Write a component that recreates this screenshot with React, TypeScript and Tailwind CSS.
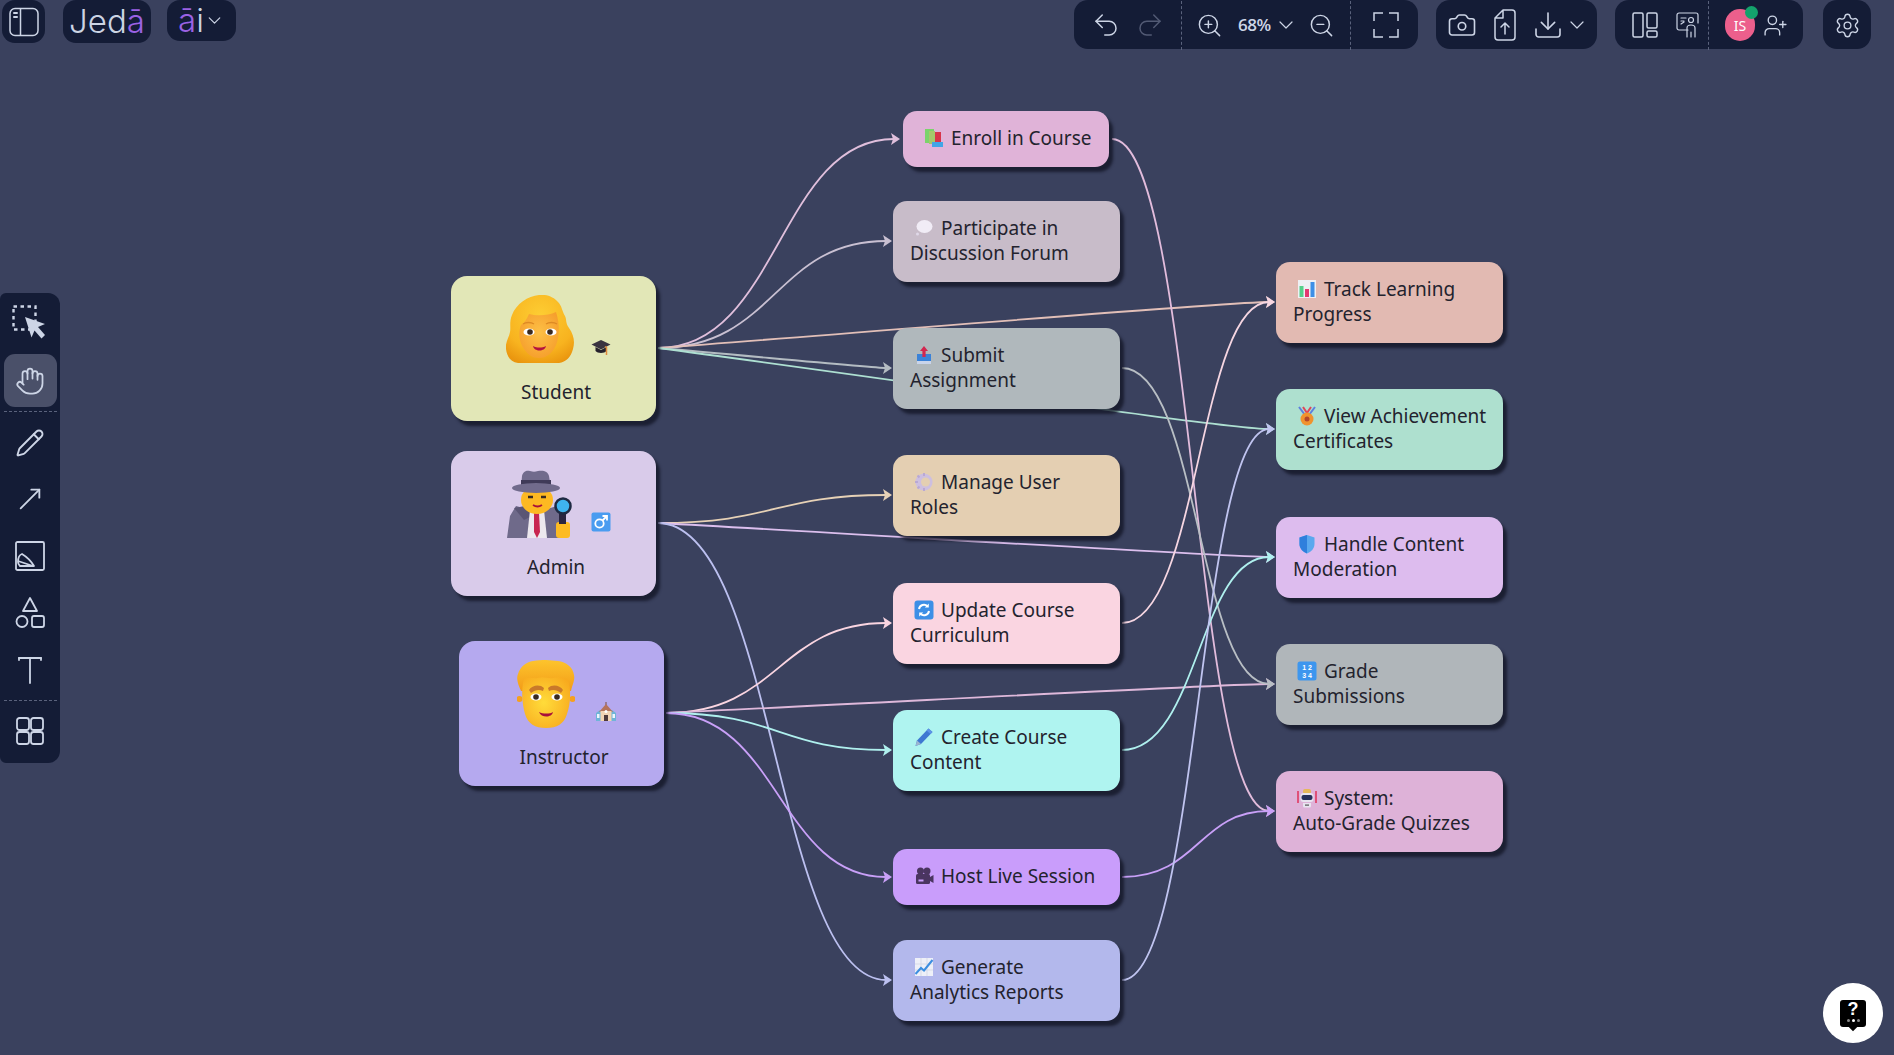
import React from "react";
import { Undo2, Redo2, ZoomIn, ZoomOut, ChevronDown, Camera, Download, Hand, Pencil, MoveUpRight, Settings, UserPlus } from "lucide-react";

const ICON = "#cdd5e6";

type P = { w?: number; children: React.ReactNode; vb?: string };
const Svg = ({ w = 20, vb = "0 0 20 20", children }: P) => (
  <svg width={w} height={w} viewBox={vb} className="shrink-0 block">{children}</svg>
);

/* ---------- small colour emoji, drawn ---------- */
const Books = () => (
  <Svg><rect x="1" y="1" width="9" height="14" fill="#7bd36b" /><rect x="5" y="3" width="6" height="13" fill="#a4c86b" /><rect x="11" y="4" width="6" height="13" fill="#d8344a" /><rect x="8" y="14" width="11" height="5" fill="#41a5e6" /></Svg>
);
const Bubble = () => (
  <Svg><ellipse cx="10.5" cy="8.500" rx="8" ry="6.500" fill="#f1ecf6" /><circle cx="3.500" cy="16" r="1.500" fill="#e0d8e8" /></Svg>
);
const Outbox = () => (
  <Svg><path d="M3 9h14v8a2 2 0 0 1-2 2H5a2 2 0 0 1-2-2z" fill="#3a82d8" /><path d="M10 1l4 5h-2.4v6H8.4V6H6z" fill="#d3264f" /><rect x="3" y="16" width="14" height="3" fill="#c9d4ea" /></Svg>
);
const Gear = () => (
  <Svg><circle cx="10" cy="10" r="8.600" fill="#cdbfe0" /><circle cx="11.500" cy="10" r="4.500" fill="#e4cfb2" /><path d="M10 1v3M10 16v3M1 10h3M3.500 3.500l2 2M3.500 16.500l2-2" stroke="#b9a8d4" strokeWidth="2" /></Svg>
);
const Refresh = () => (
  <Svg><rect x="0.5" y="0.5" width="19" height="19" rx="3" fill="#3d8fe6" /><path d="M5 9a5 5 0 0 1 8.500-2.800M15 11a5 5 0 0 1-8.500 2.800" fill="none" stroke="#fff" strokeWidth="2" /><path d="M14.800 3.500v4h-4zM5.200 16.500v-4h4z" fill="#fff" /></Svg>
);
const Pen = () => (
  <Svg><path d="M14.500 1.500l4 3.500L7 17l-5.500 2L3 13.500z" fill="#3e78d2" /><path d="M3 13.500L7 17l-5.500 2z" fill="#9cb6cf" /><path d="M14.500 1.500l4 3.500-2 2-4-3.500z" fill="#5d93e6" /></Svg>
);
const MovieCam = () => (
  <Svg><circle cx="6.500" cy="5" r="3.500" fill="#4a3560" /><circle cx="13" cy="5" r="3.500" fill="#4a3560" /><rect x="2" y="8" width="14" height="10" rx="1.500" fill="#4a3560" /><path d="M16 11l3.500-2v8L16 15z" fill="#4a3560" /><rect x="4.500" y="13.500" width="5" height="2" fill="#c99dfb" /></Svg>
);
const ChartUp = () => (
  <Svg><rect x="1" y="1" width="18" height="18" fill="#eef0f8" /><path d="M1 7h18M1 13h18M7 1v18M13 1v18" stroke="#cfd3e2" strokeWidth=".7" /><path d="M1.500 17L7 11l3 2.500L18.500 3" fill="none" stroke="#3c8ee0" strokeWidth="2" /></Svg>
);
const Bars = () => (
  <Svg><rect x="1" y="1" width="18" height="18" fill="#eef0f4" /><rect x="2.500" y="7" width="4" height="11" fill="#54d08a" /><rect x="8" y="10" width="4" height="8" fill="#e23a70" /><rect x="13.500" y="3" width="4" height="15" fill="#3d8fe6" /></Svg>
);
const Medal = () => (
  <Svg><path d="M2 1l6 8M18 1l-6 8" stroke="#5b7fe0" strokeWidth="2" /><path d="M6 1l4 6 4-6" fill="none" stroke="#e0455a" strokeWidth="2" /><circle cx="10" cy="13" r="6.500" fill="#f0932e" /><circle cx="10" cy="13" r="2.500" fill="#b4472a" /></Svg>
);
const Shield = () => (
  <Svg><path d="M10 1l7.500 2.500V10c0 4.500-3.500 8-7.500 9.500C6 18 2.500 14.500 2.500 10V3.500z" fill="#5aa8ee" /><path d="M10 1v18.500C6 18 2.500 14.500 2.500 10V3.500z" fill="#2f7fdc" /></Svg>
);
const Digits = () => (
  <Svg>
    <rect x="0.500" y="0.500" width="19" height="19" rx="2.500" fill="#3d96ee" />
    <text x="10" y="9" textAnchor="middle" fontSize="7" fontWeight="700" fill="#fff" fontFamily="Liberation Sans">1 2</text>
    <text x="10" y="17" textAnchor="middle" fontSize="7" fontWeight="700" fill="#fff" fontFamily="Liberation Sans">3 4</text>
  </Svg>
);
const Robot = () => (
  <Svg><path d="M1 3v12M19 3v12" stroke="#e0325a" strokeWidth="1.500" /><rect x="6" y="1" width="8" height="5" rx="2" fill="#e6b85a" /><rect x="3.500" y="5" width="13" height="9" rx="3" fill="#e8e4f0" /><rect x="4.500" y="7" width="11" height="5" rx="2" fill="#27305a" /><path d="M6 15h8v3a1.500 1.500 0 0 1-1.500 1.500h-5A1.500 1.500 0 0 1 6 18z" fill="#e8e4f0" /><rect x="8" y="16.500" width="4" height="1.200" fill="#555" /></Svg>
);
const Cap = () => (
  <Svg><path d="M10 3l9.500 4.500L10 12.500.5 7.500z" fill="#3a3440" /><path d="M4.500 10v4c2 2.500 9 2.500 11 0v-4l-5.500 3z" fill="#25212c" /><path d="M14 9.500l1.500 1V18" fill="none" stroke="#e08a3c" strokeWidth="1.500" /></Svg>
);
const Male = () => (
  <Svg><rect x="0.500" y="0.500" width="19" height="19" rx="2" fill="#4a9cf0" /><circle cx="8.500" cy="11.500" r="4.200" fill="none" stroke="#fff" strokeWidth="1.800" /><path d="M11.500 8.500L15.500 4.500M11.500 4h4.500v4.500" fill="none" stroke="#fff" strokeWidth="1.800" /></Svg>
);
const School = () => (
  <Svg><path d="M10 0v3" stroke="#7a4a3a" strokeWidth="1" /><path d="M0 11l4-3h12l4 3v8H0z" fill="#6fb4d8" /><path d="M3 10l7-8 7 8z" fill="#b5735c" /><rect x="4.500" y="9" width="11" height="10" fill="#f2d3b4" /><rect x="8" y="13" width="4" height="6" fill="#4f3a3c" /><circle cx="10" cy="9.500" r="1.500" fill="#fff" /><rect x="1" y="12" width="2.500" height="4" fill="#eef6fb" /><rect x="16.500" y="12" width="2.500" height="4" fill="#eef6fb" /></Svg>
);

/* ---------- large 3D-like faces ---------- */
const Woman = () => (
  <svg width="68" height="68" viewBox="0 0 68 68" className="shrink-0 block">
    <defs>
      <radialGradient id="wh" cx="50%" cy="30%" r="75%"><stop offset="0" stopColor="#fdcd33" /><stop offset="0.7" stopColor="#f8b31f" /><stop offset="1" stopColor="#ea960f" /></radialGradient>
      <radialGradient id="wf" cx="50%" cy="45%" r="65%"><stop offset="0" stopColor="#fdc046" /><stop offset="1" stopColor="#f59b2a" /></radialGradient>
    </defs>
    <path d="M33 0c7-1 15 2 19 7 4 4 4 9 7 14 2 4 0 6 4 12 5 7 6 14 4 21-2 8-7 13-14 14H12C5 67 1 62 0 54c-1-7 3-11 4-17 1-5-1-10 2-17C10 9 22 1 33 0z" fill="url(#wh)" />
    <path d="M23 19c7 2 19 2 27-2 4 11 4 28-2 37-4 6-9 9-15 9s-11-3-15-9c-5-7-6-17-3-24 3-2 6-6 8-11z" fill="url(#wf)" />
    <ellipse cx="23" cy="37" rx="5.500" ry="3.600" fill="#fff" /><ellipse cx="45" cy="37" rx="5.500" ry="3.600" fill="#fff" />
    <circle cx="24" cy="37" r="2.800" fill="#3a2a20" /><circle cx="44" cy="37" r="2.800" fill="#3a2a20" />
    <path d="M17 29c3-2 8-2 11 0M40 29c3-2 8-2 11 0" fill="none" stroke="#dd8a24" strokeWidth="1.400" />
    <path d="M27 51c4 2 9 2 13 0-1 6-12 6-13 0z" fill="#b3123f" />
  </svg>
);
const Man = () => (
  <svg width="58" height="68" viewBox="0 0 58 68" className="shrink-0 block">
    <defs>
      <radialGradient id="mf" cx="45%" cy="50%" r="65%"><stop offset="0" stopColor="#ffdc3a" /><stop offset="1" stopColor="#f8aa1e" /></radialGradient>
      <linearGradient id="mh" x1="0" y1="0" x2="0" y2="1"><stop offset="0" stopColor="#fdc42c" /><stop offset="1" stopColor="#f39c18" /></linearGradient>
    </defs>
    <path d="M29 0c5 0 8 1 12 1 8 1 15 6 16 14 1 5-1 8-3 16H4C1 24-1 19 1 14 3 7 9 2 16 1c5-1 8-1 13-1z" fill="url(#mh)" />
    <circle cx="2.500" cy="39" r="3" fill="#f5a01e" /><circle cx="55.500" cy="39" r="3" fill="#f5a01e" />
    <path d="M7 19c5-3 9 0 14-1 6-2 10 1 15 0 5-1 9-1 15 1 3 10 3 24-1 35-3 10-10 14-21 14S11 64 8 54C5 43 4 29 7 19z" fill="url(#mf)" />
    <path d="M12 30c3-5 11-6 15-2l-1 3c-4-2-8-1-12 2zM46 30c-3-5-11-6-15-2l1 3c4-2 8-1 12 2z" fill="#c9792a" />
    <ellipse cx="19" cy="37" rx="5.500" ry="3.400" fill="#fff" /><ellipse cx="40" cy="37" rx="5.500" ry="3.400" fill="#fff" />
    <circle cx="19" cy="37" r="2.800" fill="#3a2a20" /><circle cx="40" cy="37" r="2.800" fill="#3a2a20" />
    <path d="M22 52c4 2 11 2 14 0-1 6-12 6-14 0z" fill="#a8103a" />
  </svg>
);
const Sleuth = () => (
  <svg width="66" height="68" viewBox="0 0 66 68" className="shrink-0 block">
    <path d="M0 68l3-22 6-10 11 3h20l10-3 6 10 3 22z" fill="#6f6a8a" />
    <path d="M7 38l11-2 7 10-8 4z" fill="#5a5574" />
    <path d="M23 40h14l3 28H20z" fill="#ece8ee" /><path d="M27 43h5l1 19-3 6-3-6z" fill="#c8264f" />
    <ellipse cx="30" cy="30" rx="16" ry="14" fill="#fdb922" />
    <path d="M21 27h5M34 27h5" stroke="#3a2a20" strokeWidth="2.500" />
    <path d="M26 35c3 2 6 2 9 0" stroke="#a8103a" strokeWidth="1.800" fill="none" />
    <path d="M15 6c1-5 5-6 8-5 3 1 5 1 8 0 5-1 10 0 11 5l2 12H14z" fill="#716b8c" />
    <rect x="14" y="10" width="30" height="7" fill="#3f3a58" />
    <ellipse cx="29" cy="18" rx="24" ry="5" fill="#716b8c" />
    <rect x="49" y="52" width="14" height="16" rx="3" fill="#fdbb22" />
    <rect x="52" y="40" width="7" height="14" fill="#2a2540" />
    <circle cx="56" cy="36" r="7.500" fill="#3fb4ef" stroke="#1e2a42" strokeWidth="2.500" />
  </svg>
);

/* ---------- toolbar icons ---------- */
const sw = { fill: "none", stroke: ICON, strokeWidth: 1.5, strokeLinecap: "round", strokeLinejoin: "round" } as const;
const Sidebar = () => (
  <svg width="30" height="30" viewBox="0 0 30 30"><rect x="1" y="1.500" width="28" height="27" rx="5" {...sw} /><path d="M11.500 2v26" {...sw} /><path d="M5 6h3M5 10h3" {...sw} strokeWidth={2} /></svg>
);
const Corners = () => (
  <svg width="26" height="26" viewBox="0 0 26 26"><path d="M10 1H1v8M16 1h9v8M10 25H1v-8M16 25h9v-8" {...sw} strokeLinecap="butt" strokeLinejoin="miter" /></svg>
);
const FileUp = () => (
  <svg width="22" height="32" viewBox="0 0 22 32"><path d="M9 1h9a3 3 0 0 1 3 3v24a3 3 0 0 1-3 3H4a3 3 0 0 1-3-3V9z M9 1v8H1" {...sw} /><path d="M11 25V14M7 18l4-4 4 4" {...sw} /></svg>
);
const Panels = () => (
  <svg width="26" height="26" viewBox="0 0 26 26"><rect x="1" y="1" width="10" height="24" rx="1.500" {...sw} /><rect x="15" y="1" width="10" height="15" rx="1.500" {...sw} /><rect x="15" y="19" width="10" height="6" rx="1.500" {...sw} /></svg>
);
const Presenter = () => (
  <svg width="24" height="26" viewBox="0 0 24 26"><path d="M12 18H3a2 2 0 0 1-2-2V3a2 2 0 0 1 2-2h17a2 2 0 0 1 2 2v8" {...sw} strokeWidth={1.200} /><path d="M5 6h5M5 9h3M5 12l3-2" {...sw} strokeWidth={1.200} /><circle cx="15" cy="8" r="2.500" {...sw} strokeWidth={1.200} /><path d="M11 25v-9c0-2 2-3 4-3s4 1 4 3v9M15 20v5" {...sw} strokeWidth={1.200} /></svg>
);
const Select = () => (
  <svg width="36" height="34" viewBox="0 0 36 34"><rect x="1.500" y="1.500" width="22" height="23" fill="none" stroke={ICON} strokeWidth="2.400" strokeDasharray="3.500 3.500" /><path d="M13 12l20 7-7 3 7 8-3.500 3.500-7-8-3 7z" fill={ICON} /></svg>
);
const ImageTool = () => (
  <svg width="30" height="30" viewBox="0 0 30 30"><rect x="1" y="1" width="28" height="28" rx="1.500" {...sw} strokeWidth={1.800} /><path d="M3 21c0-3 1-7 4-8 5 3 9 7 12 12H5c-1-1-2-2-2-4z M3 20l15 5" {...sw} strokeWidth={1.800} /></svg>
);
const Shapes = () => (
  <svg width="30" height="32" viewBox="0 0 30 32"><path d="M15 1l7 13H8z" {...sw} strokeWidth={1.800} /><circle cx="7" cy="24.500" r="5.500" {...sw} strokeWidth={1.800} /><rect x="17" y="19" width="12" height="11" rx="2" {...sw} strokeWidth={1.800} /></svg>
);
const TextTool = () => (
  <svg width="26" height="28" viewBox="0 0 26 28"><path d="M2 2h22M13 2v25" {...sw} strokeWidth={1.800} /><path d="M2 2v2M24 2v2" {...sw} strokeWidth={1.800} /></svg>
);
const Grid = () => (
  <svg width="28" height="28" viewBox="0 0 28 28"><rect x="1" y="1" width="12" height="12" rx="2.500" {...sw} strokeWidth={1.800} /><rect x="15" y="1" width="12" height="12" rx="2.500" {...sw} strokeWidth={1.800} /><rect x="1" y="15" width="12" height="12" rx="2.500" {...sw} strokeWidth={1.800} /><rect x="15" y="15" width="12" height="12" rx="2.500" {...sw} strokeWidth={1.800} /></svg>
);

const Sep = ({ className = "" }: { className?: string }) => (
  <div className={"w-0 h-[49px] border-l border-dashed border-[#5a627c] shrink-0 " + className} />
);
const Bar = ({ className, children }: { className: string; children: React.ReactNode }) => (
  <div className={"h-[49px] flex items-center rounded-[14px] bg-[#141c36] shrink-0 " + className}>{children}</div>
);

/* ---------- diagram ---------- */
type Task = { cls: string; bg: string; icon: React.ReactNode; l1: string; l2?: string };
const tasks: Task[] = [
  { cls: "left-[903px] top-[111px] w-[206px] h-[56px] pl-[17px]", bg: "bg-[#e0b3d8]", icon: <Books />, l1: "Enroll in Course" },
  { cls: "left-[893px] top-[201px] w-[227px] h-[81px] pl-[17px]", bg: "bg-[#c8bcc9]", icon: <Bubble />, l1: "Participate in", l2: "Discussion Forum" },
  { cls: "left-[893px] top-[328px] w-[227px] h-[81px] pl-[17px]", bg: "bg-[#b0b8bc]", icon: <Outbox />, l1: "Submit", l2: "Assignment" },
  { cls: "left-[893px] top-[455px] w-[227px] h-[81px] pl-[17px]", bg: "bg-[#e4cfb2]", icon: <Gear />, l1: "Manage User", l2: "Roles" },
  { cls: "left-[893px] top-[583px] w-[227px] h-[81px] pl-[17px]", bg: "bg-[#fad5e1]", icon: <Refresh />, l1: "Update Course", l2: "Curriculum" },
  { cls: "left-[893px] top-[710px] w-[227px] h-[81px] pl-[17px]", bg: "bg-[#aff4f0]", icon: <Pen />, l1: "Create Course", l2: "Content" },
  { cls: "left-[893px] top-[849px] w-[227px] h-[56px] pl-[17px]", bg: "bg-[#c99dfb]", icon: <MovieCam />, l1: "Host Live Session" },
  { cls: "left-[893px] top-[940px] w-[227px] h-[81px] pl-[17px]", bg: "bg-[#b3b8ec]", icon: <ChartUp />, l1: "Generate", l2: "Analytics Reports" },
  { cls: "left-[1276px] top-[262px] w-[227px] h-[81px] pl-[17px]", bg: "bg-[#e2bab2]", icon: <Bars />, l1: "Track Learning", l2: "Progress" },
  { cls: "left-[1276px] top-[389px] w-[227px] h-[81px] pl-[17px]", bg: "bg-[#aee0cf]", icon: <Medal />, l1: "View Achievement", l2: "Certificates" },
  { cls: "left-[1276px] top-[517px] w-[227px] h-[81px] pl-[17px]", bg: "bg-[#ddbcee]", icon: <Shield />, l1: "Handle Content", l2: "Moderation" },
  { cls: "left-[1276px] top-[644px] w-[227px] h-[81px] pl-[17px]", bg: "bg-[#b0b6ba]", icon: <Digits />, l1: "Grade", l2: "Submissions" },
  { cls: "left-[1276px] top-[771px] w-[227px] h-[81px] pl-[17px]", bg: "bg-[#deb2d8]", icon: <Robot />, l1: "System:", l2: "Auto-Grade Quizzes" },
];

const S = { x: 658, y: 348 };
const A = { x: 658, y: 523 };
const I = { x: 666, y: 713 };
const edges: [number, number, number, number, string, boolean?][] = [
  [S.x, S.y, 900, 139, "#e0bfdc"],
  [S.x, S.y, 892, 241, "#c9c0d2"],
  [S.x, S.y, 892, 368, "#b4bcc2", true],
  [S.x, S.y, 1275, 302, "#e2bfb8", true],
  [S.x, S.y, 1275, 429, "#aee0d2", true],
  [A.x, A.y, 892, 495, "#e6d1b6"],
  [A.x, A.y, 1275, 557, "#dcbfee", true],
  [A.x, A.y, 892, 980, "#bcc0f0"],
  [I.x, I.y, 892, 623, "#fad5e1"],
  [I.x, I.y, 1275, 684, "#deb8da", true],
  [I.x, I.y, 892, 750, "#aff0ee"],
  [I.x, I.y, 892, 877, "#c9a0f8"],
  [1112, 139, 1275, 811, "#e2bcdc"],
  [1122, 368, 1275, 684, "#b8bec4"],
  [1122, 623, 1275, 302, "#f6d6e2"],
  [1122, 750, 1275, 557, "#aff0ee"],
  [1122, 877, 1275, 811, "#c9a0f8"],
  [1122, 980, 1275, 429, "#c0c4f0"],
];

const edgePath = (x0: number, y0: number, x1: number, y1: number, straight?: boolean) => {
  const dx = x1 - x0;
  if (straight) {
    const c1x = x0 + dx * 0.35;
    const c1y = y0 + (y1 - y0) * 0.35;
    return `M${x0} ${y0}C${c1x} ${c1y} ${x1 - dx * 0.08} ${y1} ${x1 - 6} ${y1}`;
  }
  return `M${x0} ${y0}C${x0 + dx / 2} ${y0} ${x1 - dx / 2} ${y1} ${x1 - 6} ${y1}`;
};

const TaskNode = ({ t }: { t: Task }) => (
  <div className={"absolute flex flex-col justify-center rounded-[14px] shadow-[4px_5px_3px_rgba(18,20,36,0.75)] text-[19px] leading-[25px] pb-[2px] text-[#23232e] " + t.cls + " " + t.bg}>
    <div className="flex items-center">
      <span className="w-[31px] pl-[4px] shrink-0">{t.icon}</span>
      <span className="whitespace-nowrap">{t.l1}</span>
    </div>
    {t.l2 && <div className="whitespace-nowrap">{t.l2}</div>}
  </div>
);

const Person = ({ cls, gap, big, small, label }: { cls: string; gap: string; big: React.ReactNode; small: React.ReactNode; label: string }) => (
  <div className={"absolute w-[205px] h-[145px] flex flex-col items-center rounded-[16px] shadow-[4px_5px_3px_rgba(18,20,36,0.75)] pt-[19px] text-[19px] leading-[25px] text-[#23232e] " + cls}>
    <div className={"flex items-end ml-[10px] h-[68px] " + gap}>
      {big}
      <span className="mb-[6px]">{small}</span>
    </div>
    <div className="mt-[17px] ml-[5px]">{label}</div>
  </div>
);

export default function App() {
  return (
    <div className="relative w-[1894px] h-[1055px] overflow-hidden bg-[#3a415e] font-['Noto_Sans','Open_Sans',sans-serif]">
      {/* diagram edges */}
      <svg className="absolute inset-0" width="1894" height="1055">
        {edges.map(([x0, y0, x1, y1, c, st], i) => (
          <g key={i}>
            <path d={edgePath(x0, y0, x1, y1, st)} fill="none" stroke={c} strokeWidth="1.800" />
            <path d={`M${x1 - 9} ${y1 - 6}L${x1} ${y1}L${x1 - 9} ${y1 + 6}L${x1 - 7} ${y1}z`} fill={c} />
          </g>
        ))}
      </svg>

      <Person cls="left-[451px] top-[276px] bg-[#e2e7b7]" gap="gap-[17px]" big={<Woman />} small={<Cap />} label="Student" />
      <Person cls="left-[451px] top-[451px] bg-[#d9cbea]" gap="gap-[18px]" big={<Sleuth />} small={<Male />} label="Admin" />
      <Person cls="left-[459px] top-[641px] bg-[#b5a9ef]" gap="gap-[21px]" big={<Man />} small={<School />} label="Instructor" />
      {tasks.map((t) => <TaskNode key={t.l1} t={t} />)}

      {/* top bar */}
      <div className="absolute inset-x-0 top-0 flex items-start pr-[23px] pl-[2px]">
        <div className="w-[43px] h-[43px] rounded-[13px] bg-[#141c36] flex items-center justify-center"><Sidebar /></div>
        <div className="ml-[18px] w-[88px] h-[43px] rounded-[13px] bg-[#141c36] flex items-center justify-center font-['Inter'] font-light text-[33px] leading-none text-[#ccd4e4]">
          Jed<span className="text-[#9b62e4]">ā</span>
        </div>
        <div className="ml-[16px] w-[69px] h-[41px] rounded-[13px] bg-[#141c36] flex items-center justify-center font-['Inter'] font-light text-[33px] leading-none text-[#ccd4e4]">
          <span className="text-[#9b62e4]">ā</span>i<ChevronDown size={21} color={ICON} strokeWidth={1.4} />
        </div>
        <div className="flex-1" />

        <Bar className="w-[344px] pt-[1px]">
          <Undo2 size={30} color={ICON} strokeWidth={1.2} className="ml-[17px]" />
          <Redo2 size={30} color="#525a74" strokeWidth={1.2} className="ml-[14px]" />
          <Sep className="ml-[16px]" />
          <ZoomIn size={27} color={ICON} strokeWidth={1.3} className="ml-[14px]" />
          <span className="ml-[15px] text-[17px] font-semibold text-[#cdd5e6] font-['Open_Sans'] tracking-[-0.5px]">68%</span>
          <ChevronDown size={24} color={ICON} strokeWidth={1.2} className="ml-[3px]" />
          <ZoomOut size={27} color={ICON} strokeWidth={1.3} className="ml-[10px]" />
          <Sep className="ml-[15px]" />
          <span className="ml-[22px]"><Corners /></span>
        </Bar>

        <Bar className="w-[161px] ml-[18px] pt-[1px]">
          <Camera size={30} color={ICON} strokeWidth={1.3} className="ml-[11px]" />
          <span className="ml-[17px]"><FileUp /></span>
          <Download size={32} color={ICON} strokeWidth={1.2} className="ml-[16px]" />
          <ChevronDown size={24} color={ICON} strokeWidth={1.2} className="ml-[1px]" />
        </Bar>

        <Bar className="w-[188px] ml-[18px] pt-[1px]">
          <span className="ml-[17px]"><Panels /></span>
          <span className="ml-[18px]"><Presenter /></span>
          <Sep className="ml-[8px]" />
          <div className="relative ml-[16px] w-[30px] h-[32px] rounded-full bg-[#ec5f8c] flex items-center justify-center text-[14px] text-white">
            IS
            <span className="absolute -top-[3px] -right-[3px] w-[13px] h-[13px] rounded-full bg-[#14a26c]" />
          </div>
          <UserPlus size={25} color={ICON} strokeWidth={1.3} className="ml-[8px]" />
        </Bar>

        <Bar className="w-[48px] ml-[20px] justify-center pt-[1px]"><Settings size={27} color={ICON} strokeWidth={1.2} /></Bar>
      </div>

      {/* left toolbar */}
      <div className="absolute left-0 top-[293px] w-[60px] h-[470px] rounded-r-[12px] rounded-l-[6px] bg-[#141c36] flex flex-col items-center pt-[4px]">
        <div className="h-[49px] mb-[8px] flex items-center justify-center"><Select /></div>
        <div className="w-[53px] h-[53px] rounded-[11px] bg-[#4a5069] flex items-center justify-center"><Hand size={30} color={ICON} strokeWidth={1.4} /></div>
        <div className="mt-[4px] w-[53px] border-t border-dashed border-[#5a627c]" />
        <div className="h-[56px] mt-[3px] flex items-center justify-center"><Pencil size={30} color={ICON} strokeWidth={1.5} /></div>
        <div className="h-[56px] flex items-center justify-center"><MoveUpRight size={32} color={ICON} strokeWidth={1.4} /></div>
        <div className="h-[58px] flex items-center justify-center"><ImageTool /></div>
        <div className="h-[56px] flex items-center justify-center"><Shapes /></div>
        <div className="h-[57px] flex items-center justify-center"><TextTool /></div>
        <div className="mt-[2px] w-[53px] border-t border-dashed border-[#5a627c]" />
        <div className="h-[60px] flex items-center justify-center"><Grid /></div>
      </div>

      {/* help */}
      <div className="absolute left-[1823px] top-[983px] w-[60px] h-[60px] rounded-full bg-white flex items-center justify-center">
        <div className="relative w-[26px] h-[27px] rounded-[3px] bg-black flex flex-col items-center text-white">
          <span className="text-[18px] leading-[19px] font-bold font-['Liberation_Sans']">?</span>
          <span className="flex gap-[2px]">
            <i className="block w-[3px] h-[3px] rounded-full bg-[#888]" />
            <i className="block w-[3px] h-[3px] rounded-full bg-white" />
            <i className="block w-[3px] h-[3px] rounded-full bg-[#888]" />
          </span>
          <span className="absolute -bottom-[3px] left-[10px] w-[6px] h-[6px] rotate-45 bg-black" />
        </div>
      </div>
    </div>
  );
}
